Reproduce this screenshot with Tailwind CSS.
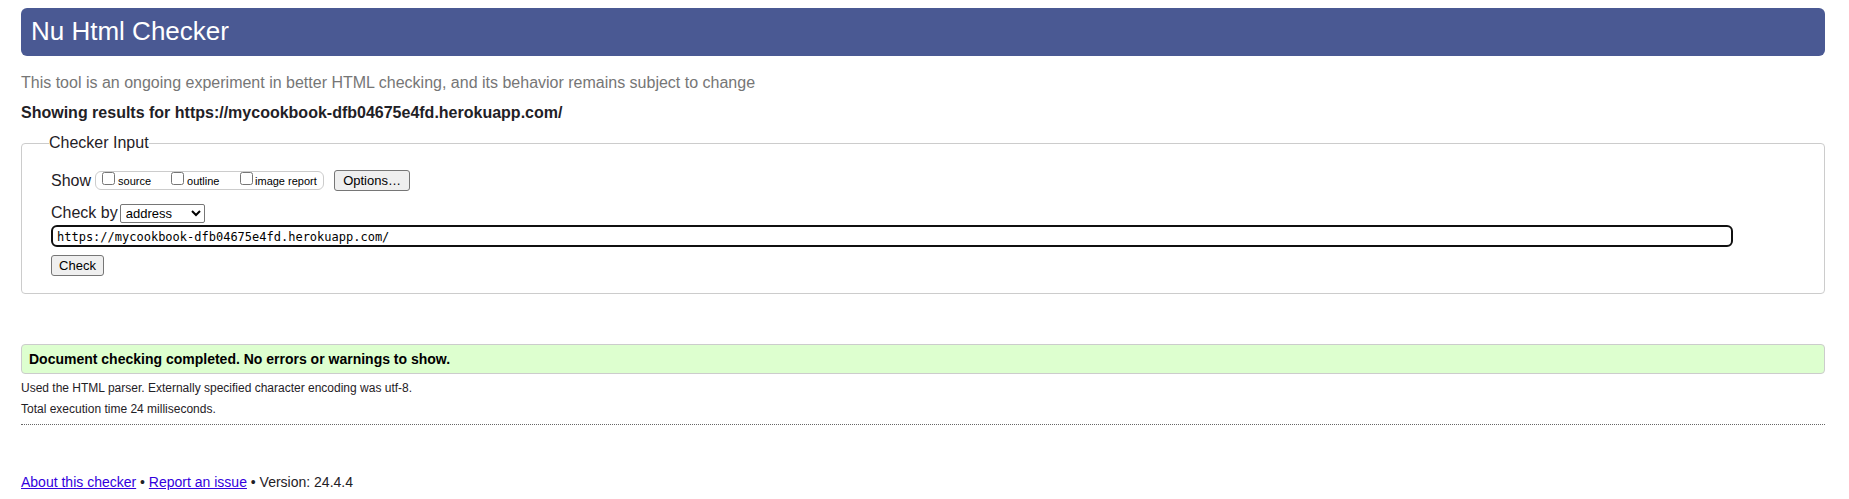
<!DOCTYPE html>
<html lang="en">
<head>
<meta charset="utf-8">
<title>Nu Html Checker</title>
<script src="https://cdn.jsdelivr.net/npm/@tailwindcss/browser@4"></script>
</head>
<body class="bg-white pt-2 pr-6 pl-[21px] font-['Liberation_Sans',Arial,sans-serif] text-base text-[#1f2126]">
<header>
  <h1 class="rounded-md bg-[#4a5993] px-[10px] pt-[7px] pb-[9px] text-[26px] leading-8 text-white">Nu Html Checker</h1>
  <p class="mt-[17px] leading-5 text-[#767676]">This tool is an ongoing experiment in better HTML checking, and its behavior remains subject to change</p>
</header>
<main>
  <h2 class="mt-[10px] font-bold leading-5">Showing results for https://mycookbook-dfb04675e4fd.herokuapp.com/</h2>
  <form>
    <fieldset class="mt-[10px] rounded border border-[#cccccc] px-[29px] pt-[17px] pb-[17px]">
      <legend class="-ml-[2px] leading-5">Checker Input</legend>
      <div class="flex items-center">
        <span class="leading-5">Show</span>
        <div class="ml-1 flex h-[19px] w-[229px] items-center rounded-md border border-[#cccccc] pl-[6px] text-[11px] leading-4 text-black">
          <label class="flex w-[69px] items-center gap-[3px]"><input type="checkbox" class="mb-1 size-[13px]"><span>source</span></label>
          <label class="flex w-[69px] items-center gap-[3px]"><input type="checkbox" class="mb-1 size-[13px]"><span>outline</span></label>
          <label class="flex items-center gap-[2px] whitespace-nowrap"><input type="checkbox" class="mb-1 size-[13px]"><span>image report</span></label>
        </div>
        <button type="button" class="ml-[10px] h-[21px] w-[76px] rounded-[3px] border border-[#767676] bg-[#efefef] text-[13px] leading-4 text-black">Options…</button>
      </div>
      <div class="mt-3 flex items-center">
        <label for="by" class="leading-5">Check by</label>
        <select id="by" class="ml-[2px] h-[19px] w-[85px] rounded-[2px] border border-[#767676] bg-white pl-px text-[13px] leading-4 text-black"><option>address</option><option>file upload</option><option>text input</option></select>
      </div>
      <div class="mt-[2px] pr-[62px]">
        <input type="url" aria-label="Address" value="https://mycookbook-dfb04675e4fd.herokuapp.com/" class="block h-[22px] w-full rounded-md border-2 border-[#101010] bg-white px-1 pt-[2px] font-['DejaVu_Sans_Mono',monospace] text-[12px] leading-4 text-black">
      </div>
      <button type="submit" class="mt-2 block h-[21px] w-[53px] rounded-[3px] border border-[#767676] bg-[#efefef] text-[13px] leading-4 text-black">Check</button>
    </fieldset>
  </form>
  <section class="mt-[50px]">
    <p class="rounded border border-[#cccccc] bg-[#ddffcf] px-[7px] py-1 text-sm font-bold leading-5 text-black">Document checking completed. No errors or warnings to show.</p>
    <p class="mt-[6px] text-xs">Used the HTML parser. Externally specified character encoding was utf-8.</p>
    <p class="mt-[5px] text-xs">Total execution time 24 milliseconds.</p>
  </section>
</main>
<footer class="mt-[7px] border-t border-dotted border-[#666666] pt-[47px] text-sm">
  <p><a href="#about" class="text-[#3300dd] underline">About this checker</a> • <a href="#issue" class="text-[#3300dd] underline">Report an issue</a> • Version: 24.4.4</p>
</footer>
</body>
</html>
